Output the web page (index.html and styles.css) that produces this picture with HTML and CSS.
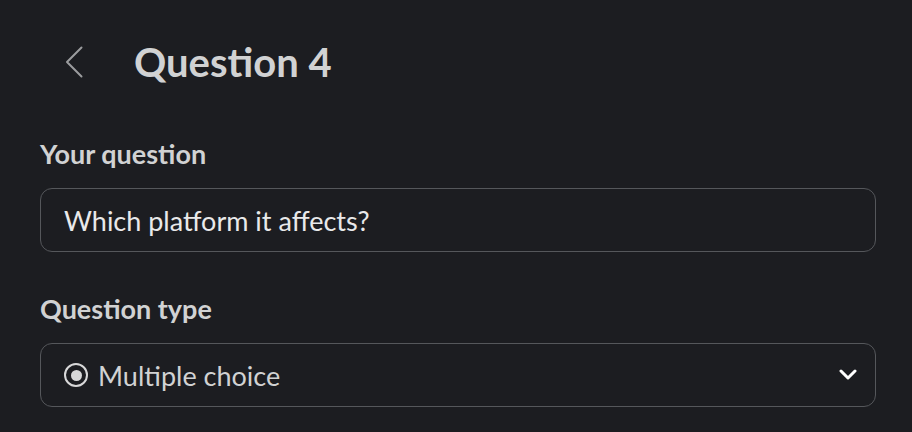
FILE: index.html
```html
<!DOCTYPE html>
<html lang="en">
<head>
<meta charset="utf-8">
<title>Question 4</title>
<link rel="stylesheet" href="styles.css">
</head>
<body>
<div class="page">
  <header class="header">
    <button class="back" aria-label="Back">
      <svg width="18" height="32" viewBox="0 0 18 32" fill="none"><path d="M16.5 1.5 L2 16 L16.5 30.5" stroke="#9b9c9e" stroke-width="2" stroke-linecap="round" stroke-linejoin="round"/></svg>
    </button>
    <h1 class="title">Question 4</h1>
  </header>

  <label class="label">Your question</label>
  <div class="field">Which platform it affects?</div>

  <label class="label label-second">Question type</label>
  <div class="field select">
    <span class="radio"><span class="dot"></span></span>
    <span class="select-text">Multiple choice</span>
    <svg class="chev" width="18" height="12" viewBox="0 0 18 12" fill="none"><path d="M2 2 L9 9 L16 2" stroke="#ffffff" stroke-width="3" stroke-linecap="round" stroke-linejoin="round"/></svg>
  </div>
</div>
</body>
</html>
```
FILE: styles.css
```css
html, body {
  margin: 0;
  padding: 0;
  background: #1c1d21;
  font-family: Lato, "Noto Sans", sans-serif;
}
.page {
  padding: 38px 36px 0 40px;
}
.header {
  display: flex;
  align-items: center;
  height: 48px;
}
.back {
  background: none;
  border: 0;
  padding: 0;
  margin-left: 25px;
  width: 18px;
  height: 32px;
  display: flex;
}
.title {
  margin: 0 0 0 51px;
  font-size: 40px;
  line-height: 48px;
  font-weight: 700;
  color: #d1d2d3;
}
.label {
  display: block;
  margin-top: 51px;
  font-size: 27px;
  line-height: 34px;
  font-weight: 700;
  color: #d1d2d3;
  margin-bottom: 17px;
}
.label-second {
  margin-top: 40px;
}
.field {
  box-sizing: border-box;
  height: 64px;
  border: 1px solid #55575b;
  border-radius: 12px;
  display: flex;
  align-items: center;
  padding: 0 23px;
  font-size: 27px;
  color: #e9e9ea;
}
.select {
  padding-left: 23px;
  padding-right: 18px;
}
.radio {
  box-sizing: border-box;
  width: 24px;
  height: 24px;
  border: 2px solid #d8d8d9;
  border-radius: 50%;
  display: flex;
  align-items: center;
  justify-content: center;
  margin-right: 10px;
}
.dot {
  width: 11px;
  height: 11px;
  border-radius: 50%;
  background: #d8d8d9;
}
.select-text {
  flex: 1;
  color: #d1d2d3;
}
.chev {
  display: block;
}
```
